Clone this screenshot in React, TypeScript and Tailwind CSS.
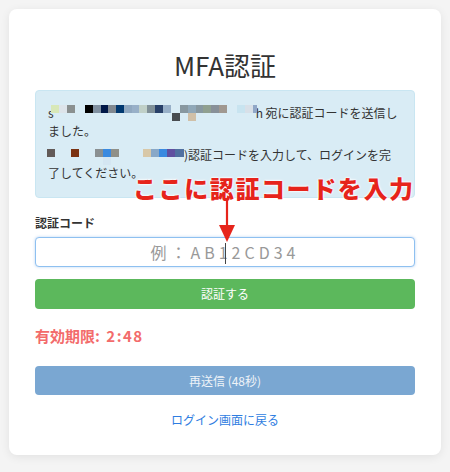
import React from "react";

type Block = { x: number; c: string; low?: boolean; w?: number };

const line1Blocks: Block[] = [
  { x: 0, c: "#d8e8b8" },
  { x: 8, c: "#dde4ea" },
  { x: 16, c: "#8a9090" },
  { x: 34, c: "#000000" },
  { x: 42, c: "#8090a0" },
  { x: 50, c: "#001848" },
  { x: 57, c: "#808890" },
  { x: 65, c: "#003870" },
  { x: 73, c: "#90a8c0" },
  { x: 81, c: "#98b0c8" },
  { x: 88, c: "#c0d0c8" },
  { x: 96, c: "#809098" },
  { x: 104, c: "#284068" },
  { x: 112, c: "#98b0c8" },
  { x: 121, c: "#484c50", low: true },
  { x: 129, c: "#8898a0" },
  { x: 137, c: "#90a8b8" },
  { x: 137, c: "#d0c0a8", low: true },
  { x: 145, c: "#8898a0" },
  { x: 152, c: "#90a090" },
  { x: 160, c: "#889098" },
  { x: 168, c: "#a09890" },
  { x: 186, c: "#c8e4f0" },
  { x: 194, c: "#d8e0e8" },
  { x: 202, c: "#90a8c8", w: 4 },
];

const line3Blocks: Block[] = [
  { x: 0, c: "#625a58" },
  { x: 24, c: "#7a3212" },
  { x: 48, c: "#8a9092" },
  { x: 56, c: "#3a8ae0" },
  { x: 56, c: "#d4e6f2", low: true },
  { x: 64, c: "#909088" },
  { x: 96, c: "#d8c8a8" },
  { x: 104, c: "#88a8c8" },
  { x: 112, c: "#3a8ae0" },
  { x: 120, c: "#6050a0" },
  { x: 128, c: "#5070a0", w: 9 },
];

function Mosaic({ blocks, top }: { blocks: Block[]; top: number }) {
  return (
    <>
      {blocks.map((b, i) => (
        <span
          key={i}
          className="absolute h-[8px]"
          style={{
            left: b.x,
            top: top + (b.low ? 8 : 0),
            width: b.w ?? 8,
            background: b.c,
          }}
        />
      ))}
    </>
  );
}

export default function App() {
  return (
    <div
      className="relative min-h-[472px] bg-[#f4f4f4] pt-[9px] px-[9px] pb-[17px] text-[#333]"
      style={{ fontFamily: '"Noto Sans CJK JP", "Noto Sans", sans-serif' }}
    >
      <div className="rounded-lg bg-white px-[26px] pt-[40px] pb-[26px] shadow-[0_2px_10px_rgba(0,0,0,0.08)]">
        <h1 className="text-center text-[26px] leading-[31px] font-normal text-[#333]">
          MFA認証
        </h1>

        <div className="mt-[10px] rounded-[4px] border border-[#c9e6f2] bg-[#d9ecf5] px-[12px] pt-[13px] pb-[15px] text-[12px] leading-[18px] text-[#333]">
          <div className="relative whitespace-nowrap">
            <span>s</span>
            <span className="inline-block w-[202px]" />
            <span>h 宛に認証コードを送信し</span>
            <span className="absolute left-[3px] top-0 h-full w-[210px]">
              <Mosaic blocks={line1Blocks} top={1} />
            </span>
          </div>
          <div className="whitespace-nowrap">ました。</div>
          <div className="relative mt-[6px] whitespace-nowrap">
            <span className="inline-block w-[136px]" />
            <span>)認証コードを入力して、ログインを完</span>
            <span className="absolute left-[-1px] top-0 h-full w-[140px]">
              <Mosaic blocks={line3Blocks} top={3} />
            </span>
          </div>
          <div className="whitespace-nowrap">了してください。</div>
        </div>

        <div className="mt-[16px] text-[12px] leading-[18px] font-bold text-[#333]">
          認証コード
        </div>
        <div className="relative mt-[5px] h-[30px] rounded-[4px] border border-[#8ec0f0] bg-white shadow-[0_0_3px_rgba(100,160,230,0.45)]">
          <div className="flex h-full items-center justify-center text-[16px] tracking-[4px] text-[#999]">
            例：AB12CD34
          </div>
          <span className="absolute left-[189px] top-[5px] h-[21px] w-px bg-[#444]" />
        </div>

        <button className="mt-[12px] flex h-[30px] w-full items-center justify-center rounded-[4px] bg-[#5cb85c] text-[12px] text-white">
          認証する
        </button>

        <div className="mt-[16px] text-[15px] leading-[22px] font-bold text-[#f36b6b]">
          有効期限<span className="tracking-[1.5px]">: 2:48</span>
        </div>

        <button className="mt-[19px] flex h-[29px] w-full items-center justify-center rounded-[4px] bg-[#7aa7d2] text-[12px] text-[#eef3f8]">
          再送信 (48秒)
        </button>

        <div className="mt-[16px] text-center text-[12px] leading-[18px] text-[#2f7de1]">
          ログイン画面に戻る
        </div>
      </div>

      <div className="absolute left-[133px] top-[176px] whitespace-nowrap text-[24px] leading-[24px] font-black tracking-[1.6px] text-[#e6241b] [text-shadow:0_0_2px_#fff,0_0_2px_#fff,0_0_3px_#fff]">
        ここに認証コードを入力
      </div>
      <svg
        className="absolute left-[218px] top-[198px]"
        width="18"
        height="46"
        viewBox="0 0 18 46"
      >
        <line x1="9" y1="2" x2="9" y2="30" stroke="#e6241b" strokeWidth="2.2" />
        <polygon points="1,27 17,27 9,44" fill="#e6241b" />
      </svg>
    </div>
  );
}
